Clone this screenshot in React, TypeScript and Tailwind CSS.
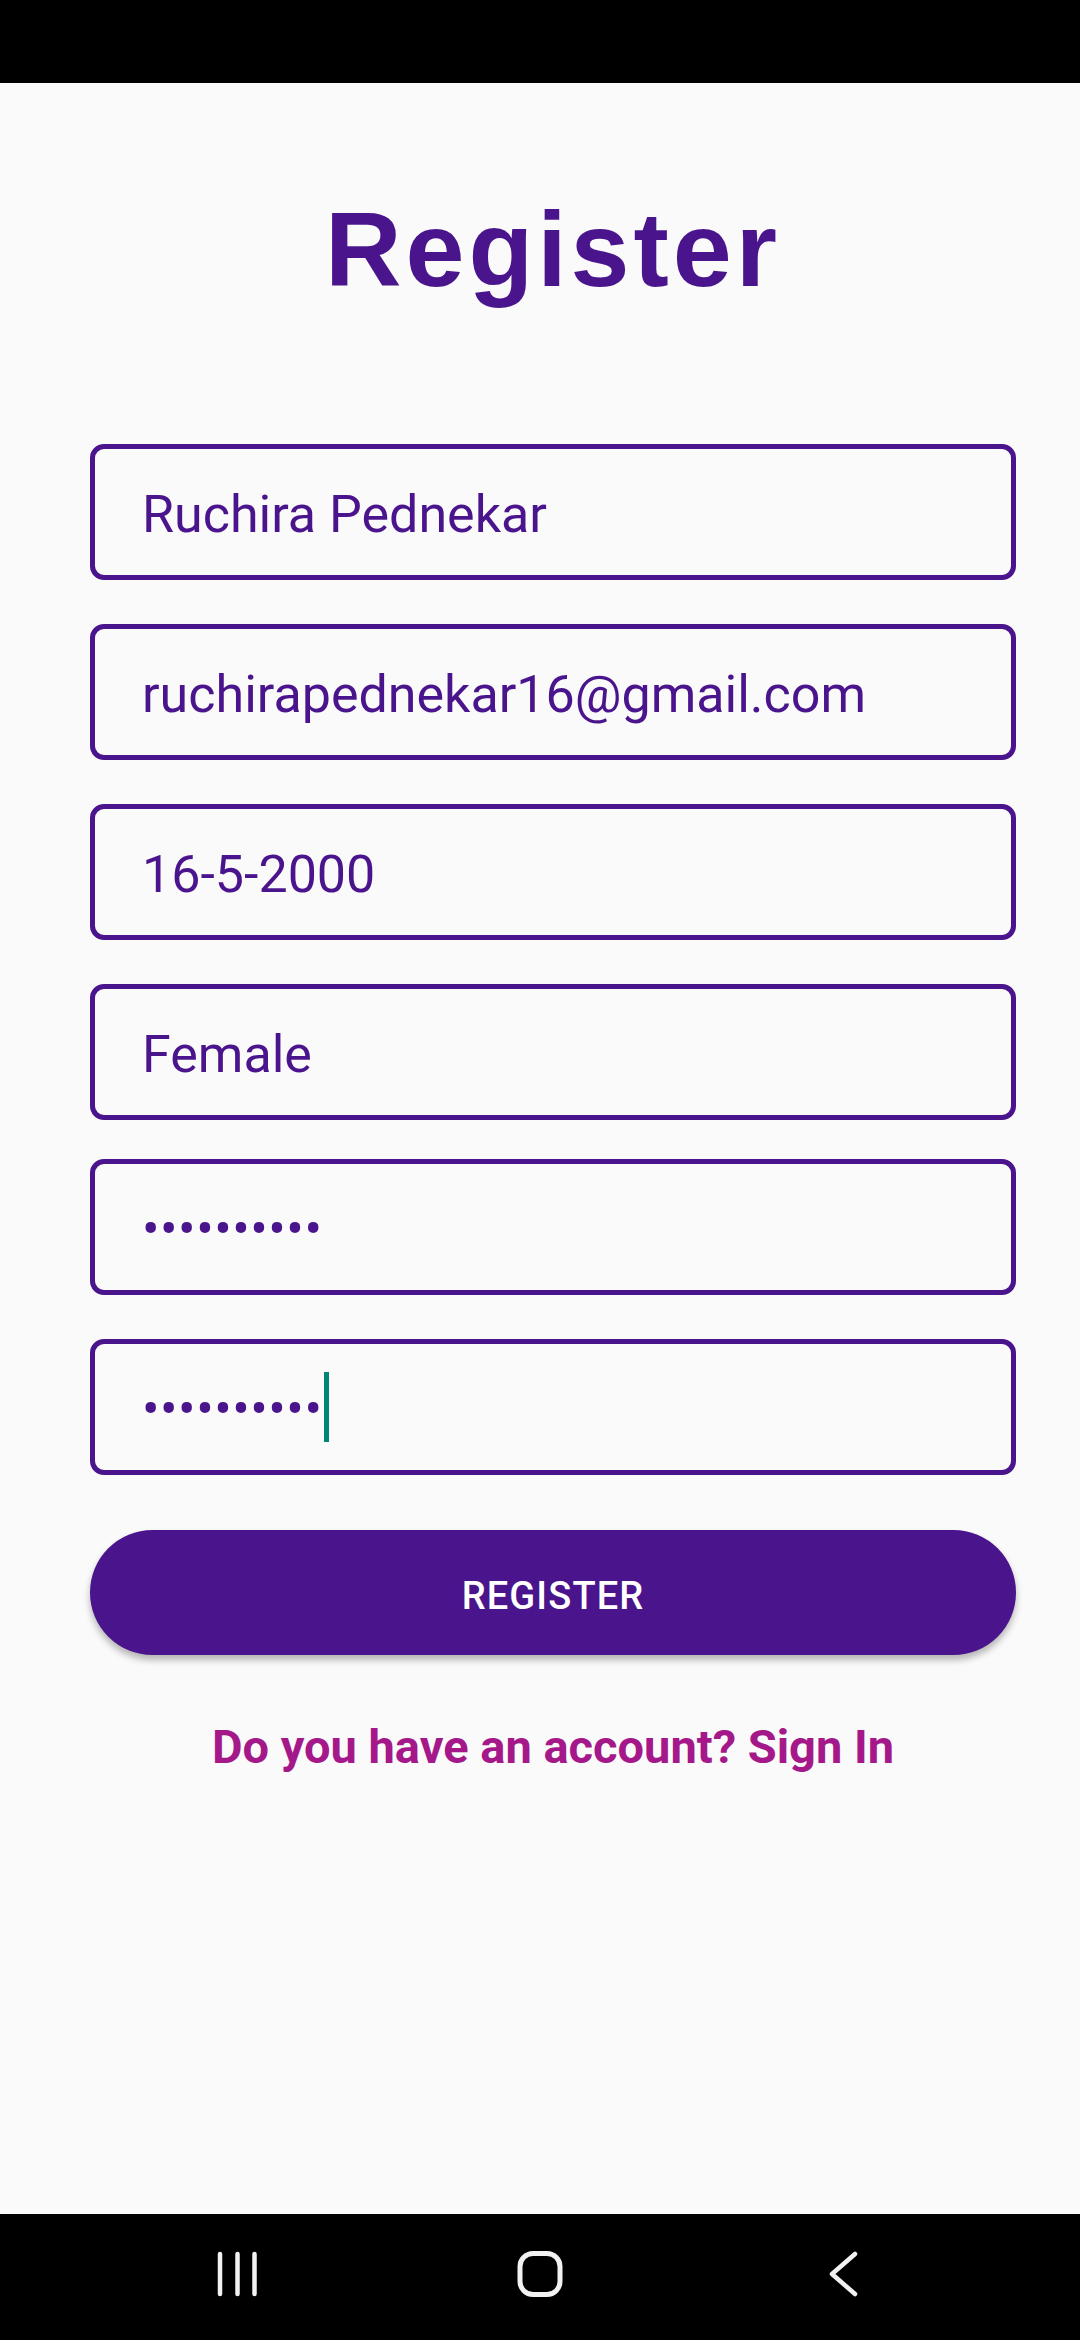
import React from 'react';

// Android register screen – status bar, form, navigation bar
const fields = [
  { value: 'Ruchira Pednekar', gap: 'mt-[142px]' },
  { value: 'ruchirapednekar16@gmail.com', gap: 'mt-[44px]' },
  { value: '16-5-2000', gap: 'mt-[44px]' },
  { value: 'Female', gap: 'mt-[44px]' },
  { value: '••••••••••', gap: 'mt-[39px]', secret: true },
  { value: '••••••••••', gap: 'mt-[44px]', secret: true, focused: true },
];

const NavBar = () => (
  <div className="h-[126px] bg-black flex items-start justify-center gap-[243px] pt-[37px]">
    {/* recents */}
    <svg width="60" height="46" viewBox="0 0 60 46" fill="none">
      <g stroke="#f2f2f2" strokeWidth="4.5" strokeLinecap="round">
        <line x1="13" y1="3" x2="13" y2="43" />
        <line x1="30.5" y1="3" x2="30.5" y2="43" />
        <line x1="47.5" y1="3" x2="47.5" y2="43" />
      </g>
    </svg>
    {/* home */}
    <svg width="60" height="46" viewBox="0 0 60 46" fill="none">
      <rect x="10" y="2.5" width="40" height="41" rx="13" stroke="#f2f2f2" strokeWidth="5" />
    </svg>
    {/* back */}
    <svg width="60" height="46" viewBox="0 0 60 46" fill="none">
      <polyline
        points="42,3 19,23 42,43"
        stroke="#f2f2f2"
        strokeWidth="4.5"
        strokeLinecap="round"
        strokeLinejoin="round"
      />
    </svg>
  </div>
);

export default function App() {
  return (
    <div className="h-[2340px] w-[1080px] flex flex-col bg-[#fafafa] font-['Roboto',sans-serif]">
      <div className="h-[83px] bg-black shrink-0" />

      <div className="flex-1 flex flex-col pl-[90px] pr-[64px] pt-[113px]">
        <h1 className="text-center text-[106px] leading-[106px] font-bold tracking-[4px] text-[#4a148c] font-['Liberation_Sans',Arial,sans-serif]">
          Register
        </h1>

        {fields.map((f, i) => (
          <div
            key={i}
            className={`${f.gap} h-[136px] border-[5px] border-[#4a148c] rounded-[14px] flex items-center pl-[47px] pt-[5px]`}
          >
            <span className={`text-[52px] leading-none text-[#4a148c] ${f.secret ? 'tracking-[0.5px]' : ''}`}>
              {f.value}
            </span>
            {f.focused && <span className="ml-[2px] w-[5px] h-[70px] bg-[#008577] -mt-[5px]" />}
          </div>
        ))}

        <button className="mt-[55px] h-[125px] rounded-full bg-[#4a148c] shadow-[0_5px_7px_rgba(0,0,0,0.28)] flex items-center justify-center pt-[6px]">
          <span className="text-white text-[38px] leading-none font-medium tracking-[0.03em]">REGISTER</span>
        </button>

        <p className="mt-[68px] text-center text-[47px] leading-[47px] font-bold text-[#a4188a]">
          Do you have an account? Sign In
        </p>
      </div>

      <NavBar />
    </div>
  );
}
